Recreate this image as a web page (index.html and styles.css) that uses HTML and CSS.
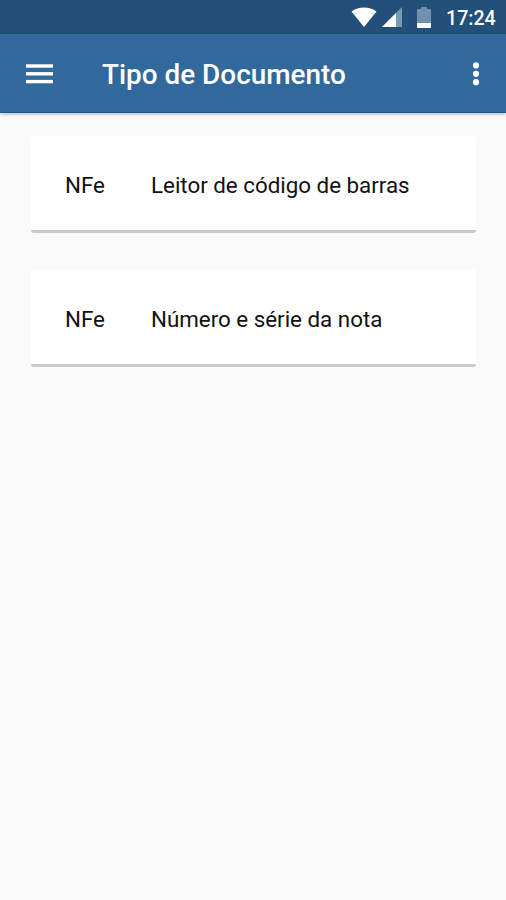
FILE: index.html
```html
<!DOCTYPE html>
<html lang="pt-BR">
  <head>
    <meta charset="UTF-8">
    <meta name="viewport" content="width=device-width, initial-scale=1.0">
    <title>Tipo de Documento</title>
    <link rel="stylesheet" href="styles.css">
  </head>
  <body>
    <div class="status-bar">
      <svg class="wifi" width="26" height="20" viewBox="0 0 26 20">
        <path d="M0.5 4.6C7.5-1 18.5-1 25.5 4.6L13 20z" fill="#fff"/>
      </svg>
      <svg class="signal" width="20" height="20" viewBox="0 0 20 20">
        <path d="M20 0V20H0z" fill="#7b98b1"/>
        <path d="M14 6V20H0z" fill="#fff"/>
      </svg>
      <svg class="battery" width="14" height="21" viewBox="0 0 14 21">
        <path d="M4 0h6v2h3a1 1 0 0 1 1 1v13H0V3a1 1 0 0 1 1-1h3z" fill="#7391ac"/>
        <path d="M0 16h14v4a1 1 0 0 1-1 1H1a1 1 0 0 1-1-1z" fill="#fff"/>
      </svg>
      <span class="time">17:24</span>
    </div>
    <header>
      <button class="menu" aria-label="Menu">
        <svg width="27" height="20" viewBox="0 0 27 20" fill="#fff">
          <rect y="0.3" width="27" height="3.4"/>
          <rect y="8.1" width="27" height="3.4"/>
          <rect y="15.9" width="27" height="3.4"/>
        </svg>
      </button>
      <h1>Tipo de Documento</h1>
      <button class="more" aria-label="Mais">
        <svg width="8" height="24" viewBox="0 0 8 24" fill="#fff">
          <circle cx="4" cy="3.4" r="3.1"/>
          <circle cx="4" cy="11.8" r="3.1"/>
          <circle cx="4" cy="20.2" r="3.1"/>
        </svg>
      </button>
    </header>
    <main>
      <div class="card">
        <span class="tipo">NFe</span>
        <span class="descricao">Leitor de código de barras</span>
      </div>
      <div class="card">
        <span class="tipo">NFe</span>
        <span class="descricao">Número e série da nota</span>
      </div>
    </main>
  </body>
</html>
```
FILE: styles.css
```css
html, body {
  margin: 0;
  min-height: 100%;
}
body {
  background-color: #fafafa;
  color: #111;
  font-family: Roboto, sans-serif;
}
.status-bar {
  display: flex;
  align-items: flex-start;
  box-sizing: border-box;
  height: 34px;
  padding: 7px 10px 0 0;
  justify-content: flex-end;
  background-color: #225078;
}
.wifi {
  margin-right: 5px;
}
.signal {
  margin-right: 15px;
}
.battery {
  margin-right: 15px;
}
.time {
  width: 50px;
  color: #fff;
  font-size: 19.6px;
  font-weight: 500;
  line-height: 23px;
  white-space: nowrap;
}
header {
  display: flex;
  align-items: center;
  box-sizing: border-box;
  height: 79px;
  padding: 0 26px;
  background-color: #31699c;
  border-bottom: 1px solid #1c5791;
  box-shadow: 0 1px 4px rgba(0, 0, 0, 0.3);
}
header button {
  display: flex;
  padding: 0;
  border: none;
  background-color: transparent;
}
.menu {
  margin-top: 1px;
}
.more {
  margin-top: 2px;
}
h1 {
  flex: 1;
  margin: 3px 0 0 49px;
  color: #fff;
  font-size: 27.9px;
  font-weight: 500;
  line-height: 32px;
  white-space: nowrap;
}
main {
  display: flex;
  flex-direction: column;
  gap: 37px;
  padding: 23px 30px 0 31px;
}
.card {
  display: flex;
  align-items: center;
  box-sizing: border-box;
  height: 97px;
  padding: 4px 34px 0;
  background-color: #fff;
  border-bottom: 3px solid #cacaca;
  border-radius: 3px;
  font-size: 22.35px;
}
.tipo {
  width: 86px;
}
```
